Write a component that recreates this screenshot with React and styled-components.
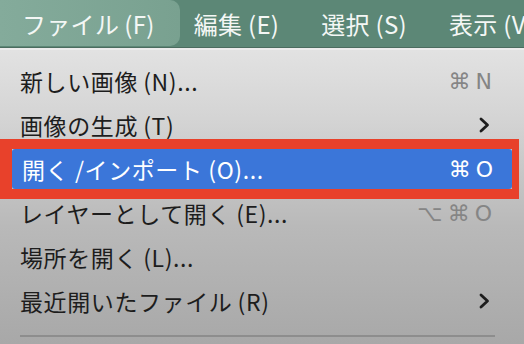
import React from "react";
import styled, { createGlobalStyle } from "styled-components";

const GlobalStyle = createGlobalStyle`
  html, body {
    margin: 0;
    padding: 0;
    width: 524px;
    height: 344px;
    overflow: hidden;
    background: #b8b8b8;
  }
  * {
    box-sizing: border-box;
  }
`;

const Screen = styled.div`
  width: 524px;
  height: 344px;
  display: flex;
  flex-direction: column;
  overflow: hidden;
  font-family: "Noto Sans CJK JP", "Noto Sans", sans-serif;
`;

const MenuBar = styled.div`
  height: 48px;
  flex-shrink: 0;
  display: flex;
  align-items: stretch;
  background: #5c8776;
  border-bottom: 1px solid #4b6c5f;
  white-space: nowrap;
`;

const BarItem = styled.div`
  display: flex;
  align-items: center;
  padding: ${(p) => (p.$active ? "0 25px 0 22px" : "0 28px 0 14px")};
  margin-bottom: 1px;
  font-size: 24px;
  color: #f4f7f5;
  letter-spacing: 0.3px;
  border-radius: 0 10px 10px 0;
  background: ${(p) =>
    p.$active ? "linear-gradient(90deg, #84ab9b, #79a190)" : "transparent"};
`;

const Menu = styled.div`
  flex: 1;
  display: flex;
  flex-direction: column;
  padding-top: 9px;
  background: linear-gradient(180deg, #e2e2e2 0%, #d3d3d3 25%, #b9b9b9 60%, #a8a8a8 100%);
  border-top: 2px solid #ececec;
`;

const Row = styled.div`
  position: relative;
  height: ${(p) => (p.$selected ? "40px" : "44px")};
  margin: ${(p) => (p.$selected ? "2px 12px" : "0")};
  padding: ${(p) => (p.$selected ? "0 19px 0 10px" : "0 32px 0 20px")};
  display: flex;
  align-items: center;
  justify-content: space-between;
  font-size: 23px;
  letter-spacing: 0.6px;
  color: ${(p) => (p.$selected ? "#ffffff" : "#1d1d1d")};
  background: ${(p) => (p.$selected ? "#3b76d9" : "transparent")};
  border-radius: ${(p) => (p.$selected ? "3px" : "0")};

  &::before {
    content: "";
    display: ${(p) => (p.$selected ? "block" : "none")};
    position: absolute;
    top: -10px;
    bottom: -10px;
    left: -12px;
    right: -7px;
    border-style: solid;
    border-color: #e8412b;
    border-width: 10px 7px 10px 12px;
    pointer-events: none;
  }
`;

const Label = styled.span`
  white-space: nowrap;
`;

const Shortcut = styled.span`
  font-family: "DejaVu Sans", "Noto Sans CJK JP", sans-serif;
  font-size: 22px;
  letter-spacing: 5px;
  margin-right: -5px;
  color: ${(p) => (p.$selected ? "#ffffff" : "#858585")};
`;

const Chevron = styled.svg`
  width: 12px;
  height: 16px;
  margin-right: 2px;
`;

const Separator = styled.div`
  margin: 12px 29px 0 20px;
  height: 2px;
  background: #8d8d8d;
`;

const items = [
  { label: "新しい画像\u2009(N)...", shortcut: "⌘N" },
  { label: "画像の生成\u2009(T)", submenu: true },
  { label: "開く /インポート (O)...", shortcut: "⌘O", selected: true },
  { label: "レイヤーとして開く\u2009(E)...", shortcut: "⌥⌘O" },
  { label: "場所を開く\u2009(L)..." },
  { label: "最近開いたファイル\u2009(R)", submenu: true },
];

function ChevronIcon() {
  return (
    <Chevron viewBox="0 0 12 16">
      <polyline
        points="3,2 9.5,8 3,14"
        fill="none"
        stroke="#1d1d1d"
        strokeWidth="2.8"
        strokeLinecap="round"
        strokeLinejoin="round"
      />
    </Chevron>
  );
}

export default function App() {
  return (
    <>
      <GlobalStyle />
      <Screen>
        <MenuBar>
          <BarItem $active>ファイル{"\u2009"}(F)</BarItem>
          <BarItem>編集 (E)</BarItem>
          <BarItem>選択 (S)</BarItem>
          <BarItem>表示 (V)</BarItem>
        </MenuBar>
        <Menu>
          {items.map((item) => (
            <Row key={item.label} $selected={item.selected}>
              <Label>{item.label}</Label>
              {item.shortcut && (
                <Shortcut $selected={item.selected}>{item.shortcut}</Shortcut>
              )}
              {item.submenu && <ChevronIcon />}
            </Row>
          ))}
          <Separator />
        </Menu>
      </Screen>
    </>
  );
}
